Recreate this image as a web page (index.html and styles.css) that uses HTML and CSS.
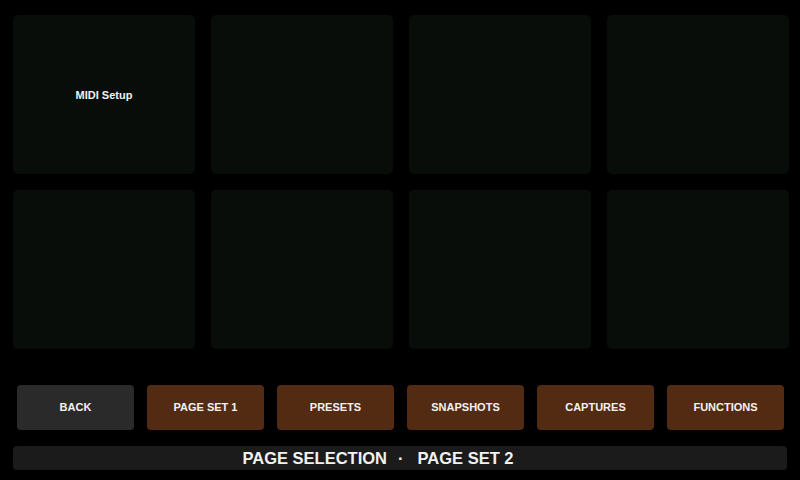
FILE: index.html
```html
<!DOCTYPE html>
<html>
<head>
<meta charset="utf-8">
<link rel="stylesheet" href="styles.css">
</head>
<body>
<div class="screen">
  <div class="tiles">
    <div class="tile">MIDI Setup</div>
    <div class="tile"></div>
    <div class="tile"></div>
    <div class="tile"></div>
    <div class="tile"></div>
    <div class="tile"></div>
    <div class="tile"></div>
    <div class="tile"></div>
  </div>
  <div class="buttons">
    <div class="btn btn-back">BACK</div>
    <div class="btn">PAGE SET 1</div>
    <div class="btn">PRESETS</div>
    <div class="btn">SNAPSHOTS</div>
    <div class="btn">CAPTURES</div>
    <div class="btn">FUNCTIONS</div>
  </div>
  <div class="status">
    <span>PAGE SELECTION</span><span class="dot">·</span><span>PAGE SET 2</span>
  </div>
</div>
</body>
</html>
```
FILE: styles.css
```css
html, body {
  margin: 0;
  padding: 0;
  background: #000;
}
body {
  width: 800px;
  height: 480px;
  overflow: hidden;
  font-family: "Liberation Sans", Arial, sans-serif;
  color: #f2f2f2;
}
.screen {
  display: flex;
  flex-direction: column;
  padding: 15px 11px 0 13px;
}
.tiles {
  display: grid;
  grid-template-columns: repeat(4, 182px);
  grid-template-rows: repeat(2, 159px);
  gap: 16px;
}
.tile {
  background: #090d0a;
  border-radius: 5px;
  display: flex;
  align-items: center;
  justify-content: center;
  font-size: 11px;
  font-weight: bold;
}
.buttons {
  display: flex;
  gap: 13px;
  margin-top: 36px;
  padding-left: 4px;
}
.btn {
  width: 117px;
  height: 45px;
  border-radius: 4px;
  background: #532a12;
  display: flex;
  align-items: center;
  justify-content: center;
  padding-bottom: 1px;
  box-sizing: border-box;
  font-size: 11px;
  font-weight: bold;
}
.btn-back {
  background: #2a2a2a;
}
.status {
  margin-top: 16px;
  width: 774px;
  height: 24px;
  box-sizing: border-box;
  border-radius: 4px;
  background: #1b1b1b;
  display: flex;
  align-items: center;
  justify-content: center;
  padding-right: 44px;
  font-size: 16.5px;
  font-weight: bold;
}
.dot {
  margin: 0 14px 0 11px;
}
```
